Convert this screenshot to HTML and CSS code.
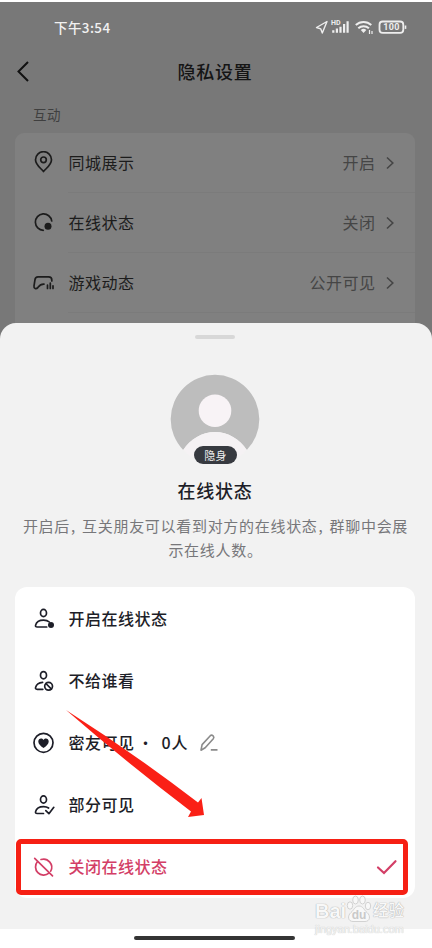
FILE: index.html
```html
<!DOCTYPE html>
<html lang="zh-CN">
<head>
<meta charset="utf-8">
<title>隐私设置</title>
<link rel="stylesheet" href="styles.css">
</head>
<body>
<div class="phone">
  <section class="page">
    <div class="status">
      <span class="time">下午3:54</span>
      <svg class="status-icons" width="96" height="20" viewBox="0 0 96 20" fill="none" stroke="#eee">
        <path d="M2.500 10.500 13 4.500 8.300 16 6.700 11.800Z" stroke-width="1.400" stroke-linejoin="round"/>
        <text x="17" y="8" class="hd">HD</text>
        <g fill="#eee" stroke="none"><path d="M18.200 13.200h2.200v2.500h-2.200zM21.800 11.400h2.200v4.300h-2.200zM25.400 9.700h2.200v6h-2.200zM29 7h2.200v8.700H29zM32.500 4.200h2.200v11.500h-2.200z"/><path d="M46.800 13a4 4 0 0 1 5.500 0l-2.800 3z"/></g>
        <path d="M41.800 8a11.300 11.300 0 0 1 15.500 0M44.300 11.300a7.700 7.700 0 0 1 10.600 0" stroke-width="2"/>
        <path d="M55.500 13v4M58 14v3" stroke-width="1.200"/>
        <rect x="65.500" y="4.500" width="23.800" height="11.400" rx="3.200" stroke-width="1.800"/>
        <path d="M91.500 8.500v3.400" stroke-width="1.600"/>
        <text x="77.500" y="13.400" text-anchor="middle" class="battery">100</text>
      </svg>
    </div>
    <header class="nav">
      <svg class="back" width="16" height="24" viewBox="0 0 16 24" fill="none" stroke="#111" stroke-width="2"><path d="M12 2 2.500 11.500l9.500 9.500"/></svg>
      <h1>隐私设置</h1>
    </header>
    <h2 class="group">互动</h2>
    <div class="settings">
      <div class="setting">
        <svg class="icon" viewBox="0 0 24 24"><path d="M11.500 20.500C8 16.500 3.500 13.500 3.500 8.700a8 8 0 0 1 16 0c0 4.800-4.500 7.800-8 11.800Z"/><circle cx="11.500" cy="8.800" r="2.800"/></svg>
        <div class="line"><span>同城展示</span><span class="value">开启</span><svg class="chev" viewBox="0 0 10 14"><path d="m2 1.500 5.800 5.500L2 12.500"/></svg></div>
      </div>
      <div class="setting">
        <svg class="icon" viewBox="0 0 24 24"><path d="M11.300 19.300A8.200 8.200 0 1 1 19.700 10"/><circle class="solid" cx="16" cy="15.200" r="3.500"/></svg>
        <div class="line"><span>在线状态</span><span class="value">关闭</span><svg class="chev" viewBox="0 0 10 14"><path d="m2 1.500 5.800 5.500L2 12.500"/></svg></div>
      </div>
      <div class="setting">
        <svg class="icon" viewBox="0 0 24 24"><path d="M19.800 10V9c0-2.200-1.200-3.200-3.200-3.200H6c-2 0-2.800 1-3 2.800l-1 6.200c-.4 3 2.200 3.800 3.800 1.800C7.500 14.400 8.400 13 12 13.200"/><path d="M15.500 14.200V17.500M18.300 12V17.500M21 14.800V17.500"/></svg>
        <div class="line"><span>游戏动态</span><span class="value">公开可见</span><svg class="chev" viewBox="0 0 10 14"><path d="m2 1.500 5.800 5.500L2 12.500"/></svg></div>
      </div>
    </div>
  </section>

  <section class="sheet">
    <div class="grip"></div>
    <div class="avatar">
      <svg width="90" height="90" viewBox="0 0 90 90"><path d="M13.200 76A44.300 44.300 0 1 1 76.800 76C69.500 65 58 58 45 58S20.500 65 13.200 76Z" fill="#bdbdbd"/><circle cx="45" cy="36.700" r="16.300" fill="#f8f3f6"/><path d="M13.200 76C20.500 65 32 58 45 58s24.500 7 31.800 18C68 86 57 88 45 88S22 86 13.200 76Z" fill="#f5f2f4"/></svg>
      <span class="badge">隐身</span>
    </div>
    <h2 class="title">在线状态</h2>
    <p class="desc">开启后<span class="comma">,</span>互关朋友可以看到对方的在线状态<span class="comma">,</span>群聊中会展<br>示在线人数。</p>
    <div class="options">
      <div class="option">
        <svg class="icon" viewBox="0 0 24 24"><ellipse cx="11.500" cy="6" rx="3" ry="3.600"/><path d="M14.700 20H5.200c-1.400 0-1.900-.7-1.600-1.900.7-3 4-5 8-5 2.400 0 4.400.7 5.700 1.900"/><circle class="solid" cx="19" cy="18" r="3"/></svg>
        <span>开启在线状态</span>
      </div>
      <div class="option">
        <svg class="icon" viewBox="0 0 24 24"><ellipse cx="11.500" cy="6.200" rx="3" ry="3.600"/><path d="M10.800 20.300H5.200c-1.400 0-1.900-.7-1.600-1.900.7-2.700 3.500-4.700 7-5"/><circle cx="16.600" cy="17.300" r="3.900"/><path d="m13.900 14.500 5.500 5.600"/></svg>
        <span>不给谁看</span>
      </div>
      <div class="option">
        <svg class="icon" viewBox="0 0 24 24"><circle cx="11.500" cy="11.800" r="9.500"/><path class="solid" d="M11.500 17.100C8.300 14.700 6.300 12.900 6.300 10.500c0-3 3.400-4 5.200-1.600 1.800-2.400 5.200-1.400 5.200 1.600 0 2.400-2 4.200-5.200 6.600Z"/></svg>
        <span>密友可见</span><span class="dot">·</span><span class="count">0人</span>
        <svg class="edit" width="20" height="20" viewBox="0 0 20 20"><path d="M2 17.200 3.100 11.600 11.300 2.700q1.300-1.200 2.800.1 1.400 1.400.2 2.900L6.200 14.800ZM11.800 16.900h6.700"/></svg>
      </div>
      <div class="option">
        <svg class="icon" viewBox="0 0 24 24"><ellipse cx="11.500" cy="6.500" rx="3" ry="3.600"/><path d="M11.500 20.500H5.200c-1.400 0-1.900-.7-1.600-1.900.7-3 4-5 8-5 2 0 3.700.5 5 1.400"/><path d="m13.800 17.700 3.100 3 4.900-6.400"/></svg>
        <span>部分可见</span>
      </div>
      <div class="option chosen">
        <svg class="icon" viewBox="0 0 24 24"><path d="M9 4.500a8.200 8.200 0 0 1 9.700 11.700M5.500 6.500a8.200 8.200 0 0 0 11.400 11.700M2.700 3.300l17.800 17.600"/></svg>
        <span>关闭在线状态</span>
        <svg class="tick" width="22" height="18" viewBox="0 0 22 18"><path d="m2 9.500 6 5.500L19.500 3.200"/></svg>
      </div>
    </div>
  </section>
  <footer class="home"><div></div></footer>

  <div class="frame"></div>
  <svg class="arrow" width="140" height="110" viewBox="0 0 140 110"><path d="M0 0 Q66 42 132 92.500L135.500 88 138 105 122 107 125 101.500Q60 52 0 0Z" fill="#fa2016"/></svg>
  <div class="watermark">
    <div class="mark"><span class="bai">Bai</span><svg width="28" height="28" viewBox="0 0 26 28"><g fill="#f8f8f8" stroke="#d2d2d2"><ellipse cx="4" cy="10.500" rx="2.700" ry="3.700"/><ellipse cx="9.500" cy="5" rx="2.800" ry="4"/><ellipse cx="16.500" cy="5" rx="2.800" ry="4"/><ellipse cx="22" cy="11" rx="2.700" ry="3.700"/><path d="M13 11c4 0 5 4 8 6.500 4 3.500 3 9-2 9H7c-5 0-6-5.500-2-9C8 15 9 11 13 11Z"/></g><text x="13" y="24" text-anchor="middle">du</text></svg><span class="exp">经验</span></div>
    <div class="url">jingyan.baidu.com</div>
  </div>
</div>
</body>
</html>
```
FILE: styles.css
```css
* { box-sizing: border-box; }
body { margin: 0; font-family: "Noto Sans CJK SC", sans-serif; background: #fff; }
h1, h2, p { margin: 0; }
.phone { position: relative; width: 432px; height: 948px; padding-top: 2px; overflow: hidden; background: #fff; }
.page { height: 341px; background: #787878; overflow: hidden; color: #1c1c1c; }
.status { display: flex; justify-content: space-between; height: 43px; padding: 15px 22px 0 54px; color: #f1f1f1; }
.time { font-size: 13.500px; line-height: 20px; font-weight: 500; letter-spacing: .4px; }
.status-icons { flex: none; }
.status-icons text { fill: #eee; stroke: none; font-family: Roboto, sans-serif; font-weight: 700; }
.status-icons .hd { font-size: 7px; }
.status-icons .battery { font-size: 9px; letter-spacing: .3px; }
.nav { display: grid; grid-template-columns: 48px 1fr 48px; align-items: center; height: 54px; }
.back { margin-left: 16px; }
.nav h1 { margin-top: -2px; padding-right: 2px; font-size: 18px; line-height: 28px; font-weight: 500; letter-spacing: .8px; text-align: center; color: #151515; }
.group { padding: 3px 33px 0; height: 34px; font-size: 13.500px; line-height: 24px; font-weight: 400; letter-spacing: .5px; color: #3f3f3f; }
.settings { margin: 0 17px 0 15px; height: 240px; border-radius: 9px; background: #808080; }
.setting { display: flex; align-items: center; height: 60px; padding-left: 17px; }
.icon { width: 24px; height: 24px; flex: none; fill: none; stroke: currentColor; stroke-width: 1.700; stroke-linecap: round; stroke-linejoin: round; }
.icon .solid { fill: currentColor; stroke: none; }
.line { display: flex; flex: 1; align-items: center; height: 60px; margin-left: 12px; padding: 0 20px 0 .5px; border-bottom: 1px solid #7b7b7b; font-size: 16px; letter-spacing: .5px; }
.line span { margin-top: -1px; }
.line .value { margin-left: auto; color: #454545; }
.chev { width: 10px; height: 14px; margin-left: 9.500px; fill: none; stroke: #454545; stroke-width: 1.600; }
.sheet { position: relative; height: 606px; margin-top: -20px; padding: 12px 17px 0 15px; border-radius: 16px 16px 0 0; background: #f2f2f2; color: #1d1e28; }
.grip { width: 40px; height: 4px; margin: 0 auto; border-radius: 2px; background: #d8d8d8; }
.avatar { position: relative; width: 90px; height: 90px; margin: 35px auto 0; }
.badge { position: absolute; left: 24px; top: 72px; width: 43px; height: 18px; border-radius: 9px; background: #373a40; color: #eee; font-size: 11px; line-height: 18px; text-align: center; letter-spacing: .2px; }
.title { margin-top: 12px; font-size: 18px; line-height: 28px; font-weight: 500; letter-spacing: .8px; text-align: center; }
.desc { margin-top: 10px; margin-right: -1px; font-size: 15px; line-height: 24px; letter-spacing: .7px; text-align: center; white-space: nowrap; color: #77777a; }
.comma { display: inline-block; width: 12px; padding-left: 1px; text-align: left; }
.options { height: 311px; margin-top: 25px; padding-top: 1px; border-radius: 12px; background: #fff; }
.option { display: flex; align-items: center; height: 62px; padding: 0 17px; font-size: 16px; font-weight: 500; letter-spacing: .5px; }
.option span { margin-top: -2px; }
.option .icon { margin-right: 12.500px; }
.dot { width: 27px; padding-left: 3px; font-weight: 400; }
.count { letter-spacing: .8px; }
.edit { margin-left: 11px; fill: none; stroke: #8b8b8b; stroke-width: 1.600; stroke-linejoin: round; }
.chosen { color: #d33e66; }
.tick { margin-left: auto; fill: none; stroke: #d33e66; stroke-width: 2.200; stroke-linecap: round; }
.home { height: 19px; padding-top: 7px; background: #fff; }
.home div { width: 161px; height: 4px; margin: 0 auto 0 134px; border-radius: 2px; background: #343434; }
.frame { position: absolute; left: 15.500px; top: 839px; width: 392px; height: 56px; border: 5px solid #f62014; border-radius: 5px; }
.arrow { position: absolute; left: 66px; top: 710px; }
.watermark { position: absolute; left: 315px; top: 895px; width: 100px; font-family: "Liberation Sans", "Noto Sans CJK SC", sans-serif; color: #f8f8f8; text-shadow: 0 0 1px #aaa, 0 0 1px #bbb; }
.mark { display: flex; align-items: flex-end; height: 28px; font-size: 20px; line-height: 24px; font-weight: 700; }
.bai { width: 30px; }
.mark svg { flex: none; }
.mark svg text { fill: #c9c9c9; font-size: 12px; text-shadow: none; }
.mark .exp { font-size: 15.500px; font-weight: 500; white-space: nowrap; }
.url { margin-top: -1px; font-size: 11px; line-height: 14px; white-space: nowrap; color: #f4f4f4; text-shadow: 0 0 1px #c4c4c4, 0 0 1px #ddd; }
```
